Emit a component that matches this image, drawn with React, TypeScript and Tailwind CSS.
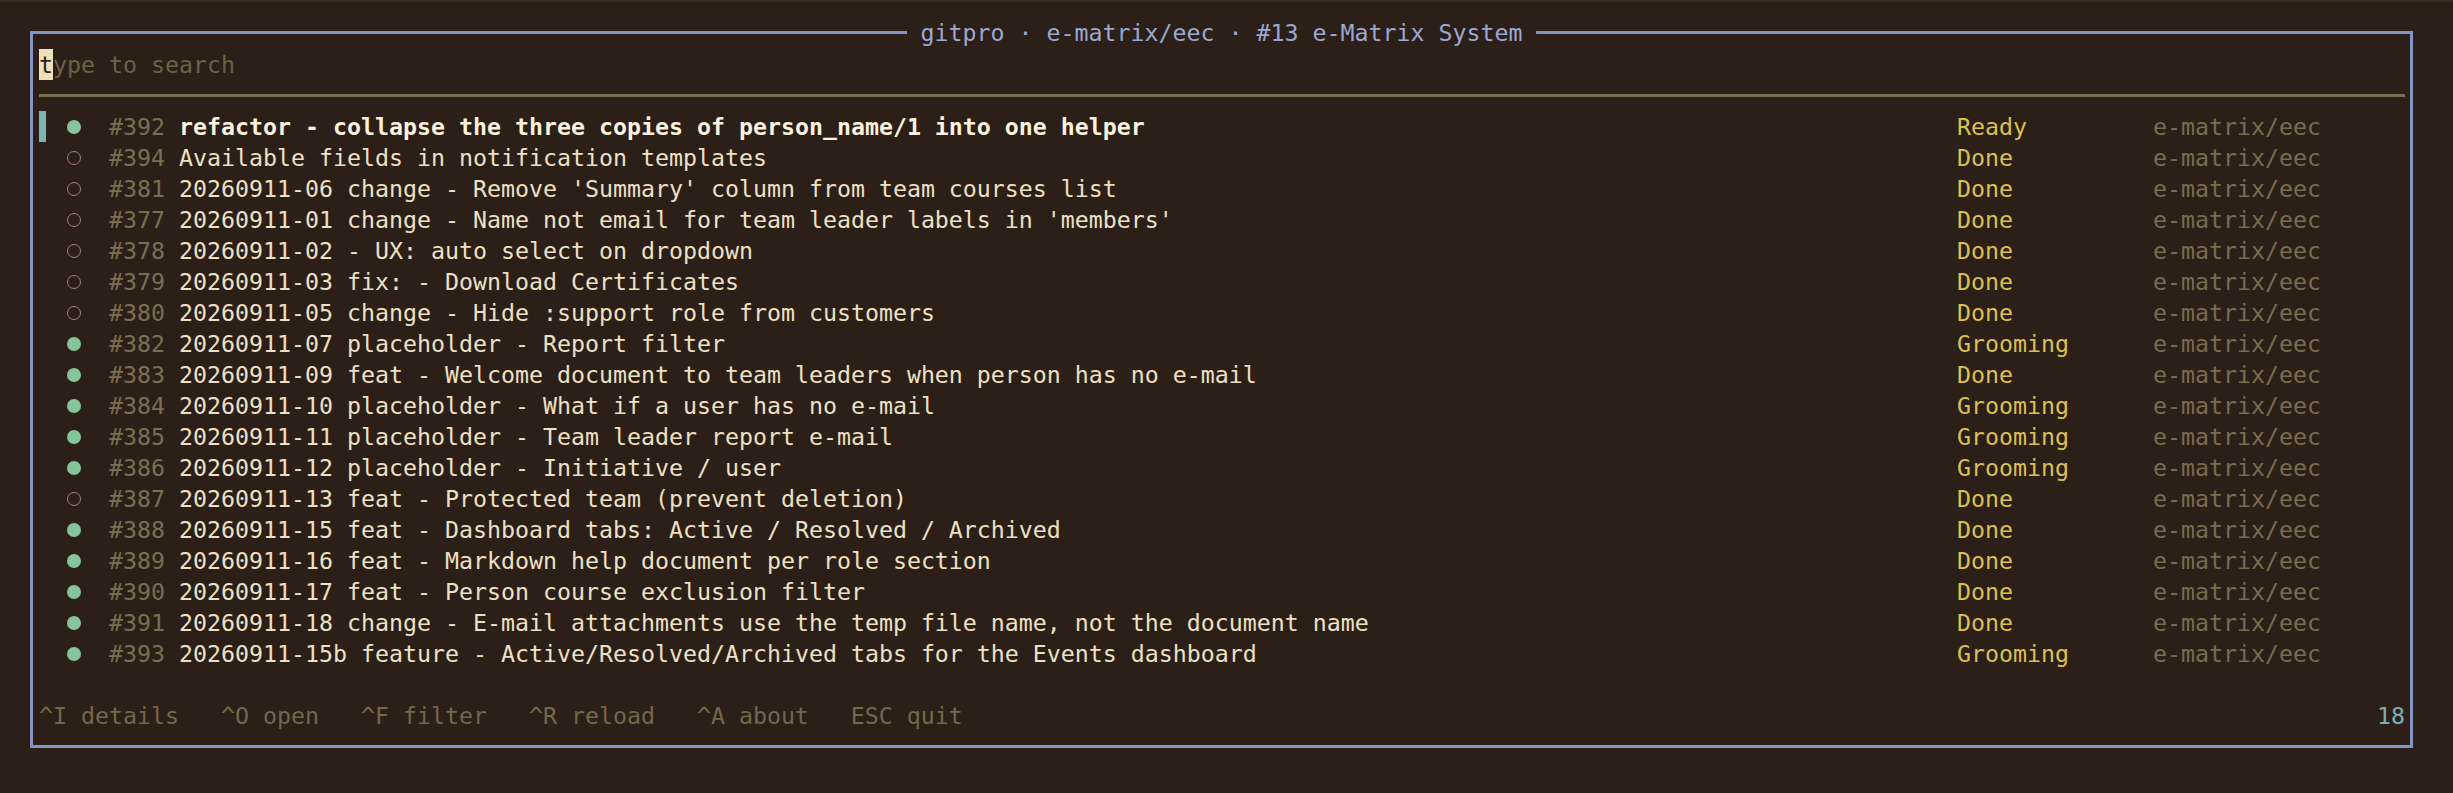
import React from "react";

type Issue = {
  num: number;
  title: string;
  status: "Ready" | "Done" | "Grooming";
  open: boolean;
};

const issues: Issue[] = [
  { num: 392, title: "refactor - collapse the three copies of person_name/1 into one helper", status: "Ready", open: true },
  { num: 394, title: "Available fields in notification templates", status: "Done", open: false },
  { num: 381, title: "20260911-06 change - Remove 'Summary' column from team courses list", status: "Done", open: false },
  { num: 377, title: "20260911-01 change - Name not email for team leader labels in 'members'", status: "Done", open: false },
  { num: 378, title: "20260911-02 - UX: auto select on dropdown", status: "Done", open: false },
  { num: 379, title: "20260911-03 fix: - Download Certificates", status: "Done", open: false },
  { num: 380, title: "20260911-05 change - Hide :support role from customers", status: "Done", open: false },
  { num: 382, title: "20260911-07 placeholder - Report filter", status: "Grooming", open: true },
  { num: 383, title: "20260911-09 feat - Welcome document to team leaders when person has no e-mail", status: "Done", open: true },
  { num: 384, title: "20260911-10 placeholder - What if a user has no e-mail", status: "Grooming", open: true },
  { num: 385, title: "20260911-11 placeholder - Team leader report e-mail", status: "Grooming", open: true },
  { num: 386, title: "20260911-12 placeholder - Initiative / user", status: "Grooming", open: true },
  { num: 387, title: "20260911-13 feat - Protected team (prevent deletion)", status: "Done", open: false },
  { num: 388, title: "20260911-15 feat - Dashboard tabs: Active / Resolved / Archived", status: "Done", open: true },
  { num: 389, title: "20260911-16 feat - Markdown help document per role section", status: "Done", open: true },
  { num: 390, title: "20260911-17 feat - Person course exclusion filter", status: "Done", open: true },
  { num: 391, title: "20260911-18 change - E-mail attachments use the temp file name, not the document name", status: "Done", open: true },
  { num: 393, title: "20260911-15b feature - Active/Resolved/Archived tabs for the Events dashboard", status: "Grooming", open: true },
];

const IssueRow: React.FC<{ issue: Issue; selected: boolean }> = ({ issue, selected }) => {
  return (
    <div className="flex h-[31px] items-center">
      <div className="h-full w-[14px]">
        {selected && <div className="h-full w-[7px] bg-[#7ab4b4]" />}
      </div>
      <div className="w-[14px]" />
      <div className="flex w-[14px] justify-center">
        {issue.open ? (
          <div className="h-[14px] w-[14px] rounded-full bg-[#84c49a]" />
        ) : (
          <div className="h-[14px] w-[14px] rounded-full border-[1.5px] border-[#b07a92]" />
        )}
      </div>
      <div className="w-[28px]" />
      <div className="w-[70px] text-[#7d6e52]">#{issue.num}</div>
      <div
        className={
          selected
            ? "w-[1778px] whitespace-pre font-bold text-[#fbf1dc]"
            : "w-[1778px] whitespace-pre text-[#eee0c4]"
        }
      >
        {issue.title}
      </div>
      <div className="w-[196px] text-[#dcc052]">{issue.status}</div>
      <div className="flex-1 text-[#7b6b4f]">e-matrix/eec</div>
    </div>
  );
};

export default function App() {
  return (
    <div className="h-[793px] w-full overflow-hidden border-t-2 border-[#3b2c1c] bg-[#2b1f17] font-['DejaVu_Sans_Mono',monospace] text-[23.25px] leading-[31px]">
      <div className="relative ml-[30px] mt-[29px] w-[2383px] border-[3px] border-[#8494c4] pb-[14px] pl-[6px] pr-[5px] pt-[15px]">
        {/* title sits on the top border */}
        <div className="absolute left-1/2 top-[-17px] -translate-x-1/2 whitespace-pre bg-[#2b1f17] px-[14px] text-[#9aa8d4]">
          gitpro · e-matrix/eec · #13 e-Matrix System
        </div>

        {/* search */}
        <div className="flex h-[31px]">
          <span className="h-[31px] w-[14px] bg-[#eedfb8] text-[#2b1f17]">t</span>
          <span className="whitespace-pre text-[#6f6148]">ype to search</span>
        </div>

        {/* separator */}
        <div className="flex h-[31px] items-center">
          <div className="h-[3px] w-full bg-[#7c6c4a]" />
        </div>

        {issues.map((issue, i) => (
          <IssueRow key={issue.num} issue={issue} selected={i === 0} />
        ))}

        <div className="h-[31px]" />

        {/* key hints */}
        <div className="flex h-[31px] justify-between">
          <span className="whitespace-pre text-[#75674b]">
            ^I details   ^O open   ^F filter   ^R reload   ^A about   ESC quit
          </span>
          <span className="text-[#7ab0b0]">18</span>
        </div>
      </div>
    </div>
  );
}
